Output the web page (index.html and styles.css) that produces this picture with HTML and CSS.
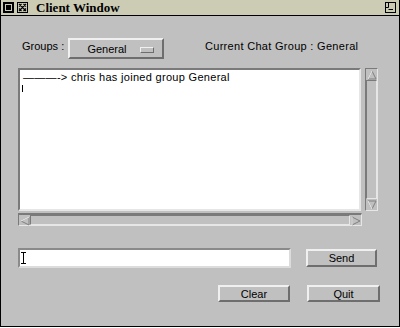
FILE: index.html
```html
<html>

<head>
    <link rel="stylesheet" href="styles.css">
</head>

<body>
    <div class="window">
        <div class="titlebar">
            <span class="tb-icon menu-icon"><span></span></span>
            <span class="tb-icon x-icon">
                <svg width="11" height="11" viewBox="0 0 11 11">
                    <rect x="0.5" y="0.5" width="10" height="10" fill="#cccbb4" stroke="#000"/>
                    <path d="M2 2L9 9M9 2L2 9M2 4.5L4.5 2M6.5 2L9 4.5M2 6.5L4.5 9M6.5 9L9 6.5" stroke="#000" stroke-width="1.2"/>
                </svg>
            </span>
            <span class="title">Client Window</span>
            <span class="tb-icon max-icon">
                <svg width="11" height="11" viewBox="0 0 11 11">
                    <rect x="0.5" y="0.5" width="10" height="10" fill="none" stroke="#000"/>
                    <path d="M3.5 1V5.5H1M3.5 7.5H8" stroke="#000" fill="none"/>
                </svg>
            </span>
        </div>

        <div class="content">
            <div class="groups-row">
                <span class="label">Groups :</span>
                <div class="btn option">General <span class="opt-mark"></span></div>
                <span class="current">Current Chat Group : General</span>
            </div>

            <div class="chat-row">
                <div class="log">
                    <div class="line">———-&gt; chris has joined group General</div>
                    <div class="caret"></div>
                </div>
                <div class="vscroll">
                    <div class="arrow up"><svg width="10" height="10" viewBox="0 0 10 10"><path d="M5 1L9 9H1Z" fill="#c0c0c0" stroke="#808080"/><path d="M5 1L1 9" stroke="#f4f4f4"/></svg></div>
                    <div class="trough"></div>
                    <div class="arrow down"><svg width="10" height="10" viewBox="0 0 10 10"><path d="M1 1H9L5 9Z" fill="#c0c0c0" stroke="#808080"/><path d="M1 1L5 9" stroke="#f4f4f4"/></svg></div>
                </div>
            </div>

            <div class="hscroll">
                <div class="arrow left"><svg width="10" height="10" viewBox="0 0 10 10"><path d="M1 5L9 1V9Z" fill="#c0c0c0" stroke="#808080"/><path d="M1 5L9 1" stroke="#f4f4f4"/></svg></div>
                <div class="trough"></div>
                <div class="arrow right"><svg width="10" height="10" viewBox="0 0 10 10"><path d="M9 5L1 1V9Z" fill="#c0c0c0" stroke="#808080"/><path d="M1 9V1" stroke="#f4f4f4"/></svg></div>
            </div>

            <div class="input-row">
                <div class="input"><div class="ibeam"></div></div>
                <div class="btn send">Send</div>
            </div>

            <div class="buttons-row">
                <div class="btn clear">Clear</div>
                <div class="btn quit">Quit</div>
            </div>
        </div>
    </div>
</body>

</html>
```

FILE: styles.css
```css
body{
    margin: 0;
    font-family: "Liberation Sans", Arial, sans-serif;
    font-size: 11px;
    color: #000;
}

.window{
    width: 400px;
    height: 327px;
    box-sizing: border-box;
    border: 1px solid #000;
    border-top: none;
    background: #c0c0c0;
    display: flex;
    flex-direction: column;
}

.titlebar{
    height: 15px;
    background: #cccbb4;
    border-bottom: 1px solid #000;
    display: flex;
    align-items: center;
    padding: 0 2px 0 2px;
}

.tb-icon{
    display: flex;
}

.menu-icon{
    width: 11px;
    height: 11px;
    box-sizing: border-box;
    border: 2px solid #000;
    background: #cccbb4;
    padding: 1px;
}

.menu-icon span{
    display: block;
    width: 100%;
    height: 100%;
    background: #000;
}

.x-icon{
    margin-left: 3px;
}

.title{
    font-family: "Liberation Serif", "Times New Roman", serif;
    font-weight: bold;
    font-size: 13px;
    margin-left: 8px;
    flex: 1;
}

.max-icon{
    margin-right: 1px;
}

.content{
    padding: 0 0 0 17px;
    display: flex;
    flex-direction: column;
}

.btn{
    box-sizing: border-box;
    border: 2px solid;
    border-color: #f0f0f0 #6e6e6e #6e6e6e #f0f0f0;
    background: #c0c0c0;
    display: flex;
    align-items: center;
    justify-content: center;
}

.groups-row{
    margin-top: 22px;
    height: 21px;
    display: flex;
    align-items: center;
}

.label{
    width: 50px;
    padding-left: 4px;
    box-sizing: border-box;
    margin-top: -5px;
}

.option{
    width: 96px;
    height: 21px;
    padding-right: 18px;
    position: relative;
}

.opt-mark{
    position: absolute;
    right: 8px;
    top: 7px;
    width: 12px;
    height: 4px;
    border: 1px solid;
    border-color: #f0f0f0 #6e6e6e #6e6e6e #f0f0f0;
    background: #c0c0c0;
}

.current{
    margin-left: 41px;
    margin-top: -5px;
    letter-spacing: 0.3px;
}

.chat-row{
    margin-top: 9px;
    height: 143px;
    display: flex;
}

.log{
    width: 343px;
    box-sizing: border-box;
    border: 2px solid;
    border-color: #7a7a7a #e6e6e6 #e6e6e6 #7a7a7a;
    background: #fff;
    padding: 1px 2px;
    position: relative;
}

.line{
    padding-left: 1px;
    letter-spacing: 0.3px;
}

.caret{
    width: 1px;
    height: 7px;
    background: #000;
    margin-top: 2px;
}

.vscroll{
    margin-left: 4px;
    width: 13px;
    box-sizing: border-box;
    border: 1px solid;
    border-color: #7a7a7a #e6e6e6 #e6e6e6 #7a7a7a;
    display: flex;
    flex-direction: column;
}

.arrow{
    display: flex;
    align-items: center;
    justify-content: center;
    width: 11px;
    height: 11px;
}

.trough{
    flex: 1;
    border: 1px solid;
    border-color: #7a7a7a #e6e6e6 #e6e6e6 #7a7a7a;
}

.hscroll{
    margin-top: 2px;
    width: 344px;
    height: 13px;
    box-sizing: border-box;
    border: 1px solid;
    border-color: #7a7a7a #e6e6e6 #e6e6e6 #7a7a7a;
    border-top-width: 2px;
    display: flex;
}

.input-row{
    margin-top: 22px;
    height: 20px;
    display: flex;
    align-items: flex-start;
}

.input{
    width: 273px;
    height: 20px;
    box-sizing: border-box;
    border: 2px solid;
    border-color: #8a8a8a #dcdcdc #dcdcdc #8a8a8a;
    background: #fff;
    display: flex;
    align-items: center;
    padding-left: 3px;
}

.ibeam{
    width: 1px;
    height: 12px;
    background: #000;
    position: relative;
}

.ibeam::before, .ibeam::after{
    content: "";
    position: absolute;
    left: -2px;
    width: 5px;
    height: 1px;
    background: #000;
}

.ibeam::before{ top: 0; }
.ibeam::after{ bottom: 0; }

.send{
    margin-left: 15px;
    margin-top: 1px;
    width: 71px;
    height: 18px;
}

.buttons-row{
    margin-top: 17px;
    height: 17px;
    display: flex;
    padding-left: 200px;
}

.clear{
    width: 72px;
    height: 17px;
}

.quit{
    margin-left: 17px;
    width: 73px;
    height: 17px;
}
```
